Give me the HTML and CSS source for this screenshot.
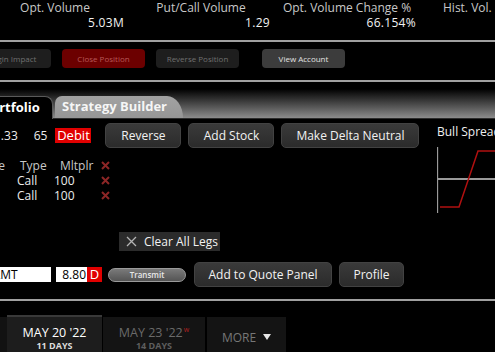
FILE: index.html
```html
<!DOCTYPE html>
<html>
<head>
<meta charset="utf-8">
<link rel="stylesheet" href="styles.css">
</head>
<body>
<div class="stats">
  <div class="stat"><div class="stat-label">Opt. Volume</div><div class="stat-value">5.03M</div></div>
  <div class="stat"><div class="stat-label">Put/Call Volume</div><div class="stat-value">1.29</div></div>
  <div class="stat"><div class="stat-label">Opt. Volume Change %</div><div class="stat-value">66.154%</div></div>
  <div class="stat stat-last"><div class="stat-label">Hist. Vol.</div><div class="stat-value"></div></div>
</div>
<div class="rule"></div>
<div class="actions">
  <button class="sbtn sbtn-dim">Margin Impact</button>
  <button class="sbtn sbtn-danger">Close Position</button>
  <button class="sbtn sbtn-dim">Reverse Position</button>
  <button class="sbtn sbtn-light">View Account</button>
</div>
<div class="rule rule-2"></div>
<div class="tabs">
  <div class="tab tab-active">Portfolio</div>
  <div class="tab tab-inactive">Strategy Builder</div>
</div>
<div class="panel">
  <div class="main">
    <div class="summary">
      <span class="num num-first">1.33</span>
      <span class="num num-qty">65</span>
      <span class="debit">Debit</span>
      <button class="btn btn-reverse">Reverse</button>
      <button class="btn btn-stock">Add Stock</button>
      <button class="btn btn-delta">Make Delta Neutral</button>
    </div>
    <div class="legs">
      <div class="leg leg-head">
        <span class="c-a">Strike</span><span class="c-b">Type</span><span class="c-c">Mltplr</span>
        <span class="c-d"><svg width="9" height="9" viewBox="0 0 9 9"><path d="M1 1L8 8M8 1L1 8" stroke="#8c2626" stroke-width="2"/></svg></span>
      </div>
      <div class="leg">
        <span class="c-a"></span><span class="c-b">Call</span><span class="c-c">100</span>
        <span class="c-d"><svg width="9" height="9" viewBox="0 0 9 9"><path d="M1 1L8 8M8 1L1 8" stroke="#8c2626" stroke-width="2"/></svg></span>
      </div>
      <div class="leg">
        <span class="c-a"></span><span class="c-b">Call</span><span class="c-c">100</span>
        <span class="c-d"><svg width="9" height="9" viewBox="0 0 9 9"><path d="M1 1L8 8M8 1L1 8" stroke="#8c2626" stroke-width="2"/></svg></span>
      </div>
    </div>
    <div class="clear-row">
      <button class="clear-btn"><svg width="11" height="11" viewBox="0 0 11 11"><path d="M1 1L10 10M10 1L1 10" stroke="#b4b4b4" stroke-width="1.3"/></svg><span>Clear All Legs</span></button>
    </div>
    <div class="order">
      <div class="field field-type">LMT</div>
      <div class="field field-price">8.80</div>
      <div class="side">D</div>
      <button class="transmit">Transmit</button>
      <button class="btn btn-quote">Add to Quote Panel</button>
      <button class="btn btn-profile">Profile</button>
    </div>
  </div>
  <div class="chart">
    <div class="chart-title">Bull Spread</div>
    <svg class="chart-svg" width="58" height="72" viewBox="0 0 58 72">
      <line x1="0.5" y1="0" x2="0.5" y2="66" stroke="#9a9a9a" stroke-width="1.3"/>
      <line x1="0" y1="32" x2="58" y2="32" stroke="#9a9a9a" stroke-width="2"/>
      <polyline points="3,60 22,60 41,4 58,4" fill="none" stroke="#b01010" stroke-width="1.5"/>
    </svg>
  </div>
</div>
<div class="rule rule-3"></div>
<div class="expiries">
  <div class="exp-lead"></div>
  <div class="exp exp-active"><div class="exp-date">MAY 20 '22</div><div class="exp-days">11 DAYS</div></div>
  <div class="exp exp-second"><div class="exp-date">MAY 23 '22<sup class="weekly">w</sup></div><div class="exp-days">14 DAYS</div></div>
  <div class="exp exp-more"><span>MORE</span><svg width="8" height="6" viewBox="0 0 8 6"><path d="M0 0H8L4 6Z" fill="#e6e6e6"/></svg></div>
</div>
</body>
</html>
```
FILE: styles.css
```css
* { box-sizing: border-box; margin: 0; padding: 0; }
html, body { background: #000; }
body {
  width: 495px;
  height: 352px;
  overflow: hidden;
  font-family: "Open Sans", "DejaVu Sans", sans-serif;
  color: #fff;
}
button { font-family: inherit; border: 0; cursor: default; }

/* stats */
.stats {
  display: grid;
  grid-template-columns: repeat(4, 146px);
  margin-left: -18px;
  height: 30px;
}
.stat-label {
  font-size: 12px;
  line-height: 15px;
  color: #c8c8c8;
  text-align: center;
  white-space: nowrap;
}
.stat-value {
  font-size: 12px;
  line-height: 15px;
  text-align: right;
  padding-right: 4px;
  color: #f2f2f2;
  letter-spacing: 0.3px;
  height: 15px;
}
.stat-last .stat-label { text-align: left; padding-left: 23px; }

.rule { height: 2px; background: #a0a0a0; margin-top: 10px; }
.rule-2 { margin-top: 12px; }
.rule-3 { margin-top: 12px; }

/* small action buttons */
.actions {
  display: flex;
  gap: 11px;
  margin: 7px 0 0 -32px;
}
.sbtn {
  width: 83px;
  height: 19px;
  border-radius: 4px;
  font-size: 8px;
  flex: none;
}
.sbtn-dim { background: #1e1e1e; color: #707070; }
.sbtn-danger { background: #6c0000; color: #b85858; }
.sbtn-light { background: #3c3c3c; color: #e2e2e2; margin-left: 12px; }

/* main tabs */
.tabs {
  height: 37px;
  margin-left: -27px;
  display: flex;
  align-items: flex-end;
  background: linear-gradient(to bottom, #000 0px, #000 7px, #8c8c8c 36px);
  border-bottom: 1px solid #2c2c2c;
}
.tab {
  height: 22px;
  font-size: 13px;
  font-weight: bold;
  line-height: 21px;
  white-space: nowrap;
}
.tab-active {
  width: 80px;
  height: 23px;
  margin-bottom: -1px;
  background: #000;
  border-top: 1px solid #5a5a5a;
  border-right: 1px solid #5a5a5a;
  border-top-right-radius: 8px;
  padding-left: 10px;
  color: #fff;
}
.tab-inactive {
  width: 128px;
  margin-left: 2px;
  background: linear-gradient(#a2a2a2, #969696);
  color: #f6f6f6;
  padding-left: 7px;
  border-top-left-radius: 7px;
  border-top-right-radius: 16px 22px;
}

/* panel */
.panel { display: flex; }
.main { width: 430px; flex: none; }
.chart { flex: 1; padding-left: 7px; padding-top: 5px; }
.chart-title { font-size: 12px; line-height: 15px; color: #f0f0f0; white-space: nowrap; }
.chart-svg { display: block; margin-top: 8px; }

.summary {
  display: flex;
  align-items: center;
  height: 25px;
  margin-top: 4px;
  font-size: 12px;
  color: #ececec;
}
.num-first { margin-left: -6px; }
.num-qty { margin-left: 16px; }
.debit {
  margin-left: 8px;
  width: 36px;
  height: 15px;
  line-height: 15px;
  background: #e10000;
  color: #fff;
  font-size: 13px;
  text-align: center;
}
.btn {
  height: 25px;
  border-radius: 5px;
  background: linear-gradient(#3a3a3a, #2b2b2b);
  border: 1px solid #424242;
  color: #f2f2f2;
  font-size: 12px;
  flex: none;
}
.btn-reverse { width: 76px; margin-left: 14px; }
.btn-stock { width: 86px; margin-left: 7px; }
.btn-delta { width: 138px; margin-left: 7px; }

.legs { margin-top: 10px; font-size: 12px; }
.leg {
  display: grid;
  grid-template-columns: 14px 40px 47px 14px;
  line-height: 15px;
  color: #ececec;
}
.leg-head { color: #c8c8c8; }
.leg span { white-space: nowrap; }
.c-a { display: flex; justify-content: flex-end; padding-right: 9px; }
.c-b { padding-left: 3px; }
.leg-head .c-b { padding-left: 6px; }
.leg-head .c-c { padding-left: 6px; }
.c-d { display: flex; align-items: center; }

.clear-row { margin-top: 29px; padding-left: 119px; }
.clear-btn {
  width: 101px;
  height: 19px;
  background: #2b2b2b;
  color: #f2f2f2;
  font-size: 12px;
  display: flex;
  align-items: center;
  gap: 7px;
  padding-left: 7px;
}
.clear-btn svg { flex: none; }

.order {
  display: flex;
  align-items: center;
  height: 25px;
  margin-top: 11px;
  font-size: 12px;
}
.field {
  height: 15px;
  line-height: 15px;
  background: #fff;
  color: #000;
}
.field-type { width: 61px; margin-left: -10px; padding-left: 4px; }
.field-price { width: 31px; margin-left: 5px; text-align: right; padding-right: 1px; }
.side {
  width: 15px;
  height: 15px;
  line-height: 15px;
  background: #e10000;
  color: #fff;
  text-align: center;
  font-size: 13px;
}
.transmit {
  width: 78px;
  height: 14px;
  margin-left: 6px;
  border-radius: 7px;
  background: linear-gradient(#7a7a7a, #545454);
  border: 1px solid #9a9a9a;
  color: #e8e8e8;
  font-size: 8px;
  font-weight: 600;
  line-height: 12px;
}
.btn-quote { width: 138px; margin-left: 8px; }
.btn-profile { width: 65px; margin-left: 7px; }

/* expiries */
.expiries {
  display: flex;
  margin-top: 14px;
  height: 42px;
}
.exp-lead { width: 7px; background: #121212; margin-top: 2px; }
.exp {
  background: #141414;
  text-align: center;
  margin-top: 2px;
  padding-top: 9px;
  white-space: nowrap;
}
.exp-active {
  width: 95px;
  margin-top: 0;
  background: #1d1d1d;
  border-top: 2px solid #393939;
  color: #fff;
}
.exp-second { width: 102px; margin-left: 1px; color: #6a6a6a; }
.exp-more {
  width: 79px;
  margin-left: 2px;
  padding-top: 0;
  display: flex;
  align-items: center;
  justify-content: center;
  gap: 7px;
  font-size: 12px;
  color: #777;
}
.exp-date { font-size: 12.5px; line-height: 14px; }
.exp-days { font-size: 9px; font-weight: bold; line-height: 12px; color: #dcdcdc; }
.exp-second .exp-days { color: #5e5e5e; }
.weekly { font-size: 7px; color: #b02020; vertical-align: 5px; line-height: 0; margin-left: 1px; }
```
